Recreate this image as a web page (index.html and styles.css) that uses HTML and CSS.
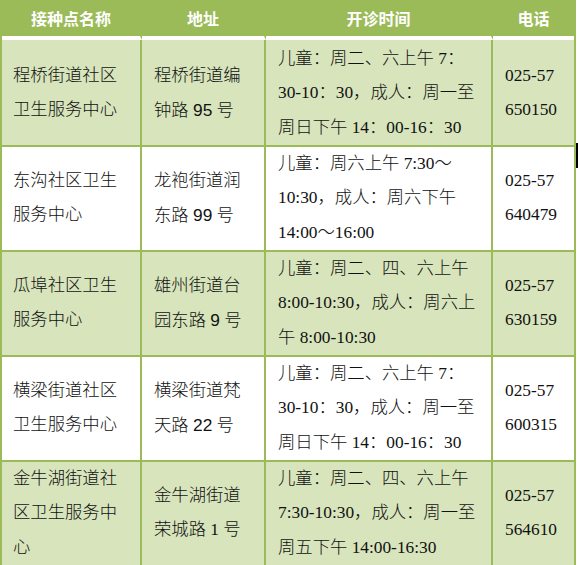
FILE: index.html
```html
<!DOCTYPE html>
<html lang="zh-CN">
<head>
<meta charset="utf-8">
<title>接种点</title>
<link rel="stylesheet" href="styles.css">
</head>
<body>
<div class="page">
<table class="sites">
  <colgroup>
    <col class="c1"><col class="c2"><col class="c3"><col class="c4">
  </colgroup>
  <thead>
    <tr><th>接种点名称</th><th>地址</th><th>开诊时间</th><th>电话</th></tr>
  </thead>
  <tbody>
    <tr class="alt first">
      <td>程桥街道社区<br>卫生服务中心</td>
      <td>程桥街道编<br>钟路 <span class="a">95</span> 号</td>
      <td>儿童：周二、六上午 7：<br>30-10：30，成人：周一至<br>周日下午 14：00-16：30</td>
      <td>025-57<br>650150</td>
    </tr>
    <tr>
      <td>东沟社区卫生<br>服务中心</td>
      <td>龙袍街道润<br>东路 <span class="a">99</span> 号</td>
      <td>儿童：周六上午 7:30～<br>10:30，成人：周六下午<br>14:00～16:00</td>
      <td>025-57<br>640479</td>
    </tr>
    <tr class="alt">
      <td>瓜埠社区卫生<br>服务中心</td>
      <td>雄州街道台<br>园东路 <span class="a">9</span> 号</td>
      <td>儿童：周二、四、六上午<br>8:00-10:30，成人：周六上<br>午 8:00-10:30</td>
      <td>025-57<br>630159</td>
    </tr>
    <tr>
      <td>横梁街道社区<br>卫生服务中心</td>
      <td>横梁街道梵<br>天路 <span class="a">22</span> 号</td>
      <td>儿童：周二、六上午 7：<br>30-10：30，成人：周一至<br>周日下午 14：00-16：30</td>
      <td>025-57<br>600315</td>
    </tr>
    <tr class="alt">
      <td>金牛湖街道社<br>区卫生服务中<br>心</td>
      <td>金牛湖街道<br>荣城路 1 号</td>
      <td>儿童：周二、四、六上午<br>7:30-10:30，成人：周一至<br>周五下午 14:00-16:30</td>
      <td>025-57<br>564610</td>
    </tr>
  </tbody>
</table>
<div class="caret"></div>
</div>
</body>
</html>
```
FILE: styles.css
```css
html, body {
  margin: 0;
  padding: 0;
  background: #ffffff;
}
.page {
  position: relative;
  width: 578px;
  height: 565px;
  overflow: hidden;
}
.sites {
  border-collapse: separate;
  border-spacing: 0;
  table-layout: fixed;
  width: 576px;
  border-left: 2px solid #9bbb59;
  border-right: 2px solid #9bbb59;
  font-family: "Liberation Serif", "Noto Sans CJK SC", serif;
  font-size: 17.33px;
  color: #111;
}
.c1 { width: 140px; }
.c2 { width: 124px; }
.c3 { width: 227px; }
.c4 { width: 81px; }
.sites th {
  background: #9bbb59;
  color: #ffffff;
  font-family: "Noto Sans CJK SC", sans-serif;
  font-weight: bold;
  font-size: 16px;
  height: 36px;
  padding: 0;
  line-height: 34px;
  text-align: center;
  border-bottom: 4px solid #ffffff;
  border-right: 2px solid #9bbb59;
}
.sites th:last-child { border-right: 0; }
.sites td {
  padding: 0 8px 0 12px;
  line-height: 34.33px;
  vertical-align: middle;
  text-align: left;
  border-right: 2px solid #9bbb59;
  border-bottom: 2px solid #9bbb59;
  white-space: nowrap;
  overflow: hidden;
  font-weight: 300;
}
.sites tr.first td { padding-top: 2px; }
.sites td:first-child { padding-left: 11px; }
.sites td:last-child { border-right: 0; }
.sites tr.alt td { background: #d7e4bc; }
.a { font-family: "Liberation Sans", sans-serif; }
.caret {
  position: absolute;
  left: 576px;
  top: 143px;
  width: 2px;
  height: 25px;
  background: #000;
}
```
